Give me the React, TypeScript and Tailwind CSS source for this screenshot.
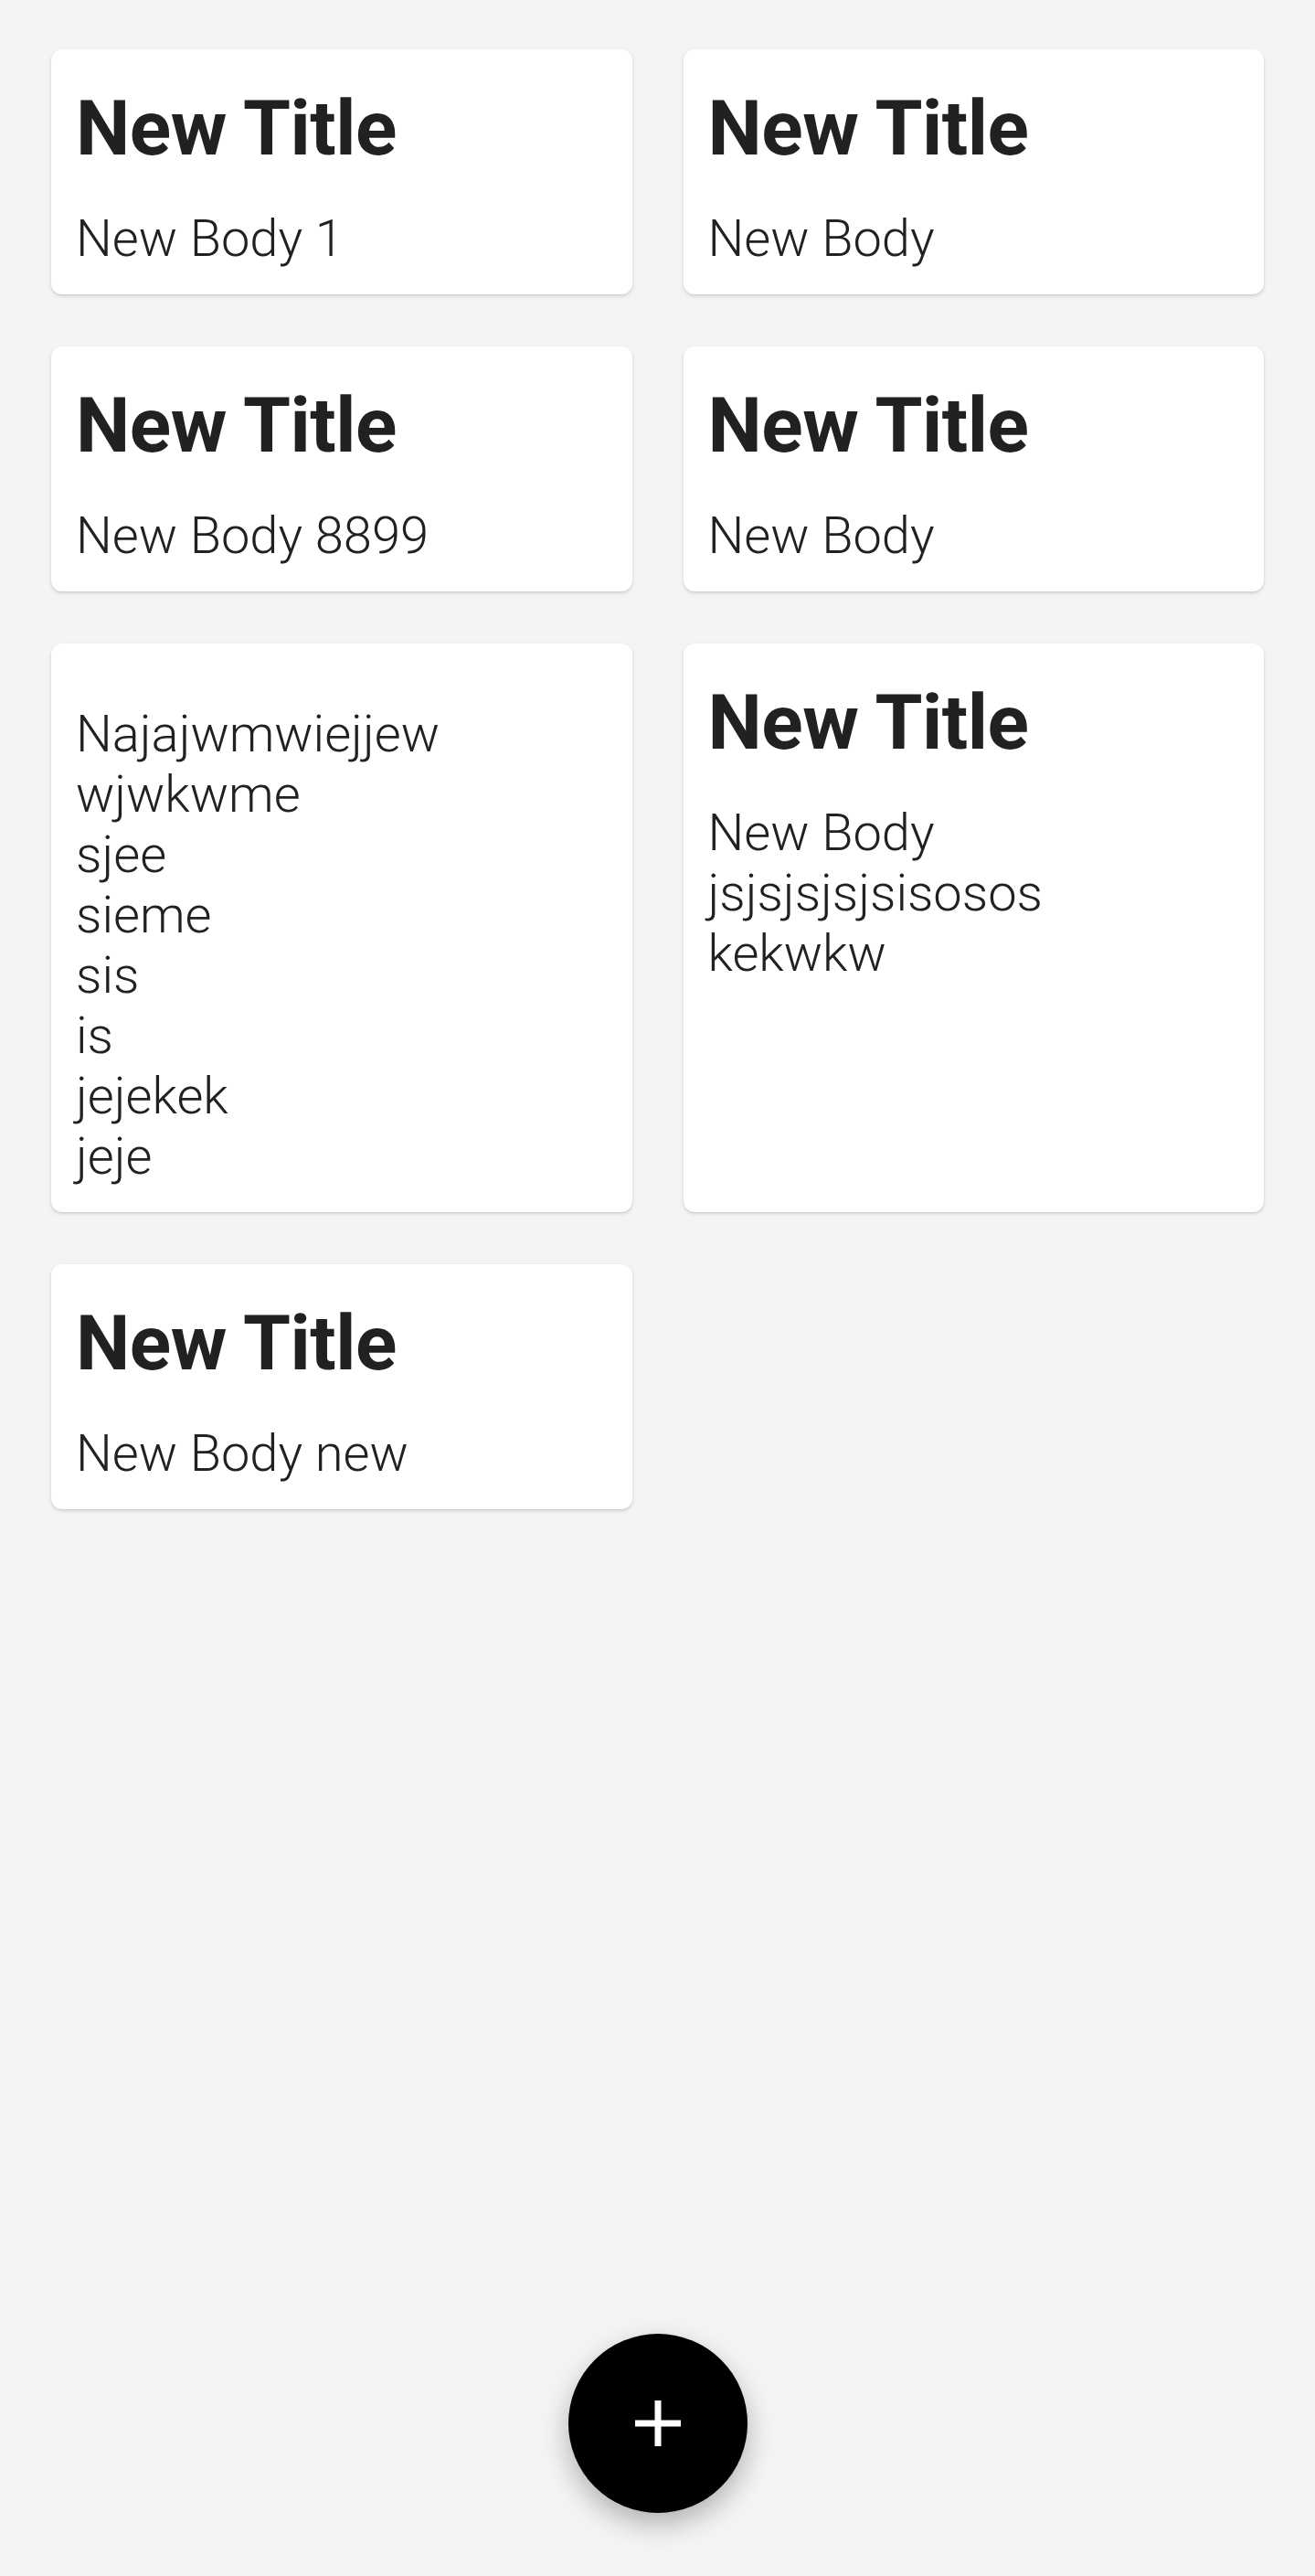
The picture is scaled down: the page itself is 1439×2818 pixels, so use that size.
import React from "react";

type Note = { title: string; body: string };

const notes: Note[] = [
  { title: "New Title", body: "New Body 1" },
  { title: "New Title", body: "New Body" },
  { title: "New Title", body: "New Body 8899" },
  { title: "New Title", body: "New Body" },
  { title: "", body: "Najajwmwiejjew\nwjwkwme\nsjee\nsieme\nsis\nis\njejekek\njeje" },
  { title: "New Title", body: "New Body\njsjsjsjsjsisosos\nkekwkw" },
  { title: "New Title", body: "New Body new" },
];

function NoteCard({ note }: { note: Note }) {
  return (
    <div className="bg-white rounded-[12px] shadow-[0_2px_4px_rgba(0,0,0,0.12),0_1px_2px_rgba(0,0,0,0.08)] pt-[29px] pb-[28px] pl-[27px] pr-[29px]">
      {note.title ? (
        <div className="text-[84px] leading-[116px] font-bold text-[#212121] mb-[29px] tracking-[-0.5px]">
          {note.title}
        </div>
      ) : (
        <div className="h-[8px] mb-[29px]" />
      )}
      <div className="text-[56px] leading-[66px] font-light text-[#212121] whitespace-pre-line">
        {note.body}
      </div>
    </div>
  );
}

export default function App() {
  return (
    <div
      className="relative min-h-[2818px] w-full bg-[#f4f4f4]"
      style={{ fontFamily: "Roboto, 'Noto Sans', sans-serif" }}
    >
      <div className="grid grid-cols-2 gap-x-[56px] gap-y-[57px] px-[56px] pt-[54px] items-stretch">
        {notes.map((n, i) => (
          <NoteCard key={i} note={n} />
        ))}
      </div>
      <button className="absolute left-1/2 -translate-x-1/2 bottom-[69px] w-[196px] h-[196px] rounded-full bg-black flex items-center justify-center shadow-[0_12px_30px_rgba(0,0,0,0.28)]">
        <svg width="50" height="50" viewBox="0 0 50 50">
          <rect x="0" y="21.5" width="50" height="7" fill="#ffffff" />
          <rect x="21.5" y="0" width="7" height="50" fill="#ffffff" />
        </svg>
      </button>
    </div>
  );
}
